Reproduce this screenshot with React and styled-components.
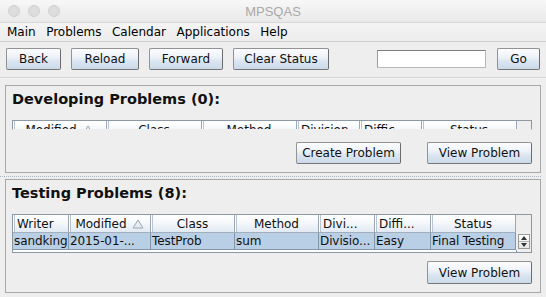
import React from 'react';
import styled, { createGlobalStyle } from 'styled-components';

const Global = createGlobalStyle`
  html, body { margin: 0; padding: 0; background: #eeeeee; }
  body { font-family: "DejaVu Sans", "Liberation Sans", sans-serif; }
`;

const Window = styled.div`
  width: 546px;
  height: 297px;
  overflow: hidden;
  display: flex;
  flex-direction: column;
  background: #eeeeee;
  font-family: "DejaVu Sans", "Liberation Sans", sans-serif;
  font-size: 12px;
  color: #000;
`;

const TitleBar = styled.div`
  height: 22px;
  flex: none;
  box-sizing: border-box;
  padding: 0 8px;
  display: grid;
  grid-template-columns: 1fr auto 1fr;
  align-items: center;
  background: linear-gradient(#f7f7f7, #e9e9e9);
`;

const Lights = styled.div`
  display: flex;
  gap: 8px;
`;

const Light = styled.span`
  width: 12px;
  height: 12px;
  border-radius: 50%;
  box-sizing: border-box;
  background: #dddddd;
  border: 1px solid #d0d0d0;
`;

const Title = styled.div`
  font-family: "Liberation Sans", Arial, sans-serif;
  font-size: 13px;
  color: #a9a9a9;
`;

const MenuBar = styled.div`
  height: 20px;
  flex: none;
  box-sizing: border-box;
  border-top: 1px solid #d8d8d8;
  border-bottom: 1px solid #cdcdcd;
  background: linear-gradient(#f4f4f4, #ececec);
  display: flex;
  align-items: center;
  gap: 10.5px;
  padding-left: 7px;
`;

const MenuItem = styled.span`
  font-size: 12px;
  white-space: nowrap;
`;

const Toolbar = styled.div`
  height: 36px;
  flex: none;
  box-sizing: border-box;
  padding: 6px 6px 0 6px;
  display: flex;
  align-items: flex-start;
  gap: 10px;
  border-bottom: 1px solid #d2d2d2;
  box-shadow: 0 1px 0 #f8f8f8;
`;

const Button = styled.button`
  width: ${p => p.$w}px;
  height: ${p => p.$h || 22}px;
  flex: none;
  box-sizing: border-box;
  padding: 0;
  border: 1px solid #939393;
  border-right-color: #6c6c6c;
  border-bottom-color: #777777;
  border-radius: 2px;
  background: linear-gradient(#fbfcfe 0%, #eef3f9 40%, #dbe6f1 60%, #cbdaea 100%);
  font-family: "DejaVu Sans", sans-serif;
  font-size: 12px;
  color: #111;
  cursor: default;
`;

const SearchField = styled.input`
  width: 109px;
  height: 18px;
  box-sizing: border-box;
  margin: 2px 1px 0 auto;
  background: #ffffff;
  border: 1px solid #b8b8b8;
  border-top-color: #7d7d7d;
  border-left-color: #9a9a9a;
  outline: none;
  padding: 0 3px;
  font-size: 12px;
`;

const Content = styled.div`
  flex: 1;
  display: flex;
  flex-direction: column;
  padding: 7px 5px 0 5px;
`;

const Panel = styled.section`
  height: ${p => p.$h}px;
  flex: none;
  box-sizing: border-box;
  border: 1px solid #a7a7a7;
  padding: 4px 6px 0 6px;
  display: flex;
  flex-direction: column;
`;

const PanelTitle = styled.h2`
  margin: 0;
  height: 19px;
  line-height: 19px;
  font-family: "DejaVu Sans", sans-serif;
  font-size: 14.5px;
  font-weight: bold;
  color: #111;
`;

const Splitter = styled.div`
  height: 6px;
  flex: none;
  margin: 0 -5px;
  display: flex;
  align-items: center;
  &::before {
    content: "";
    display: block;
    width: 541px;
    height: 1px;
    background: repeating-linear-gradient(90deg, #b0b6bd 0 1px, transparent 1px 2px);
  }
`;

const Table = styled.div`
  margin-top: ${p => p.$top}px;
  width: 520px;
  height: ${p => p.$h}px;
  overflow: hidden;
  box-sizing: border-box;
  border: 1px solid #8d98a5;
  border-bottom-color: ${p => (p.$clipped ? 'transparent' : '#8d98a5')};
  background: #eeeeee;
`;

const Row = styled.div`
  display: grid;
  grid-template-columns: ${p => p.$cols};
`;

const HeadCell = styled.div`
  height: 18px;
  box-sizing: border-box;
  border-right: 1px solid #9ba7b5;
  border-bottom: 1px solid #a3afbc;
  box-shadow: inset 1px 0 0 #ffffff, inset 2px 0 0 #b9c4d0;
  background: linear-gradient(#ffffff 0%, #f5f8fb 45%, #e1e9f2 100%);
  display: flex;
  align-items: center;
  justify-content: ${p => (p.$left ? 'flex-start' : 'center')};
  padding-left: ${p => (p.$left ? 4 : 0)}px;
  white-space: nowrap;
  overflow: hidden;
  font-size: 12px;
  color: #111;
`;

const Filler = styled.div`
  height: ${p => p.$h}px;
  background: #eeeeee;
  display: flex;
  justify-content: center;
  align-items: flex-start;
`;

const Cell = styled.div`
  height: 17px;
  box-sizing: border-box;
  background: #b9cfe6;
  border-right: 1px solid #8396ab;
  border-bottom: 1px solid #8396ab;
  padding-left: 1px;
  line-height: 16px;
  white-space: nowrap;
  overflow: hidden;
  font-size: 12px;
  letter-spacing: -0.1px;
  color: #111;
`;

const NextRowSliver = styled.div`
  height: 2px;
  width: 503px;
  background: #ffffff;
  border-right: 1px solid #8396ab;
`;

const Arrows = styled.div`
  margin-top: 1px;
  width: 12px;
  height: 15px;
  box-sizing: border-box;
  border: 1px solid #9a9a9a;
  background: linear-gradient(#ffffff, #e6e6e6);
  display: flex;
  flex-direction: column;
`;

const ArrowHalf = styled.div`
  flex: 1;
  display: flex;
  align-items: center;
  justify-content: center;
  border-top: ${p => (p.$down ? '1px solid #b0b0b0' : 'none')};
`;

const Actions = styled.div`
  margin-top: ${p => p.$top}px;
  display: flex;
  justify-content: flex-end;
  gap: 26px;
  padding-right: 2px;
`;

const SortIcon = () => (
  <svg width="12" height="10" viewBox="0 0 12 10" style={{ marginLeft: 5 }}>
    <path d="M6 1 L11 9 L1 9 Z" fill="#e6edf4" stroke="#9aa6b3" strokeWidth="1" />
  </svg>
);

const Tri = ({ down }) => (
  <svg width="6" height="4" viewBox="0 0 6 4">
    <path d={down ? 'M0 0 L6 0 L3 4 Z' : 'M3 0 L6 4 L0 4 Z'} fill="#333" />
  </svg>
);

const devCols = '94px 95px 95px 63px 62px 95px 1fr';
const devHeads = [
  { t: 'Modified', sort: true },
  { t: 'Class' },
  { t: 'Method' },
  { t: 'Division', left: true },
  { t: 'Diffic...', left: true },
  { t: 'Status' },
];

const testCols = '56px 82px 84px 84px 56px 56px 85px 1fr';
const testHeads = [
  { t: 'Writer', left: true },
  { t: 'Modified', sort: true },
  { t: 'Class' },
  { t: 'Method' },
  { t: 'Divi...', left: true },
  { t: 'Diffi...', left: true },
  { t: 'Status' },
];
const testRow = ['sandking', '2015-01-...', 'TestProb', 'sum', 'Divisio...', 'Easy', 'Final Testing'];

export default function App() {
  return (
    <>
      <Global />
      <Window>
        <TitleBar>
          <Lights>
            <Light />
            <Light />
            <Light />
          </Lights>
          <Title>MPSQAS</Title>
          <div />
        </TitleBar>
        <MenuBar>
          {['Main', 'Problems', 'Calendar', 'Applications', 'Help'].map(m => (
            <MenuItem key={m}>{m}</MenuItem>
          ))}
        </MenuBar>
        <Toolbar>
          <Button $w={55}>Back</Button>
          <Button $w={68}>Reload</Button>
          <Button $w={74}>Forward</Button>
          <Button $w={96}>Clear Status</Button>
          <SearchField />
          <Button $w={43}>Go</Button>
        </Toolbar>
        <Content>
          <Panel $h={88}>
            <PanelTitle>Developing Problems (0):</PanelTitle>
            <Table $top={11} $h={10} $clipped>
              <Row $cols={devCols}>
                {devHeads.map(h => (
                  <HeadCell key={h.t} $left={h.left}>
                    {h.t}
                    {h.sort && <SortIcon />}
                  </HeadCell>
                ))}
                <Filler $h={18} />
              </Row>
            </Table>
            <Actions $top={12}>
              <Button $w={105}>Create Problem</Button>
              <Button $w={105}>View Problem</Button>
            </Actions>
          </Panel>
          <Splitter />
          <Panel $h={114}>
            <PanelTitle>Testing Problems (8):</PanelTitle>
            <Table $top={11} $h={39}>
              <Row $cols={testCols}>
                {testHeads.map(h => (
                  <HeadCell key={h.t} $left={h.left}>
                    {h.t}
                    {h.sort && <SortIcon />}
                  </HeadCell>
                ))}
                <Filler $h={18} />
              </Row>
              <Row $cols={testCols}>
                {testRow.map((c, i) => (
                  <Cell key={i}>{c}</Cell>
                ))}
                <Filler $h={17}>
                  <Arrows>
                    <ArrowHalf>
                      <Tri />
                    </ArrowHalf>
                    <ArrowHalf $down>
                      <Tri down />
                    </ArrowHalf>
                  </Arrows>
                </Filler>
              </Row>
              <NextRowSliver />
            </Table>
            <Actions $top={8}>
              <Button $w={105} $h={23}>View Problem</Button>
            </Actions>
          </Panel>
        </Content>
      </Window>
    </>
  );
}
